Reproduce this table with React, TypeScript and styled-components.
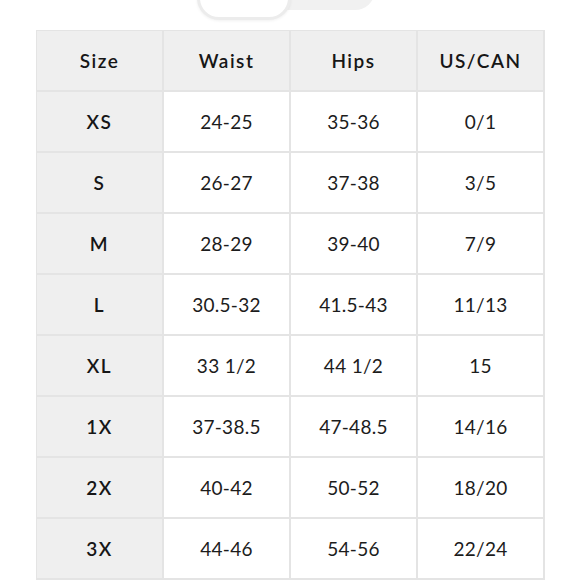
import React from "react";
import styled, { createGlobalStyle } from "styled-components";

const GlobalStyle = createGlobalStyle`
  html, body {
    margin: 0;
    padding: 0;
    background: #ffffff;
  }
  body {
    font-family: "Lato", "Open Sans", sans-serif;
    color: #1c1c1c;
  }
`;

const Page = styled.div`
  width: 580px;
  height: 580px;
  overflow: hidden;
  display: flex;
  flex-direction: column;
`;

const TopArea = styled.div`
  height: 31px;
  position: relative;
  overflow: hidden;
`;

const Track = styled.div`
  position: absolute;
  left: 197px;
  top: -30px;
  width: 178px;
  height: 40px;
  border-radius: 20px;
  background: #f1f1f1;
`;

const Knob = styled.div`
  position: absolute;
  left: 197px;
  top: -32px;
  width: 88px;
  height: 46px;
  border-radius: 22px;
  background: #ffffff;
  border: 3px solid #ececec;
  box-shadow: 0 1px 3px rgba(0, 0, 0, 0.06);
`;

const Table = styled.div`
  margin-left: 36px;
  width: 508px;
  display: grid;
  grid-template-columns: repeat(4, 1fr);
  grid-auto-rows: 61px;
  border-top: 1px solid #e4e4e4;
  border-left: 1px solid #e4e4e4;
`;

const Cell = styled.div<{ $head?: boolean; $shade?: boolean }>`
  display: flex;
  align-items: center;
  justify-content: center;
  border-right: 2px solid #e4e4e4;
  border-bottom: 2px solid #e4e4e4;
  background: ${(p) => (p.$shade ? "#efefef" : "#ffffff")};
  font-size: 19px;
  font-weight: ${(p) => (p.$head ? 600 : 400)};
  letter-spacing: ${(p) => (p.$head ? "1.5px" : "0.3px")};
  color: ${(p) => (p.$head ? "#161616" : "#1c1c1c")};
`;

const header = ["Size", "Waist", "Hips", "US/CAN"];

const rows = [
  ["XS", "24-25", "35-36", "0/1"],
  ["S", "26-27", "37-38", "3/5"],
  ["M", "28-29", "39-40", "7/9"],
  ["L", "30.5-32", "41.5-43", "11/13"],
  ["XL", "33 1/2", "44 1/2", "15"],
  ["1X", "37-38.5", "47-48.5", "14/16"],
  ["2X", "40-42", "50-52", "18/20"],
  ["3X", "44-46", "54-56", "22/24"],
];

export default function App() {
  return (
    <Page>
      <GlobalStyle />
      <TopArea>
        <Track />
        <Knob />
      </TopArea>
      <Table>
        {header.map((h) => (
          <Cell key={h} $head $shade>
            {h}
          </Cell>
        ))}
        {rows.map((row) =>
          row.map((v, i) => (
            <Cell key={row[0] + i} $head={i === 0} $shade={i === 0}>
              {v}
            </Cell>
          ))
        )}
      </Table>
    </Page>
  );
}
